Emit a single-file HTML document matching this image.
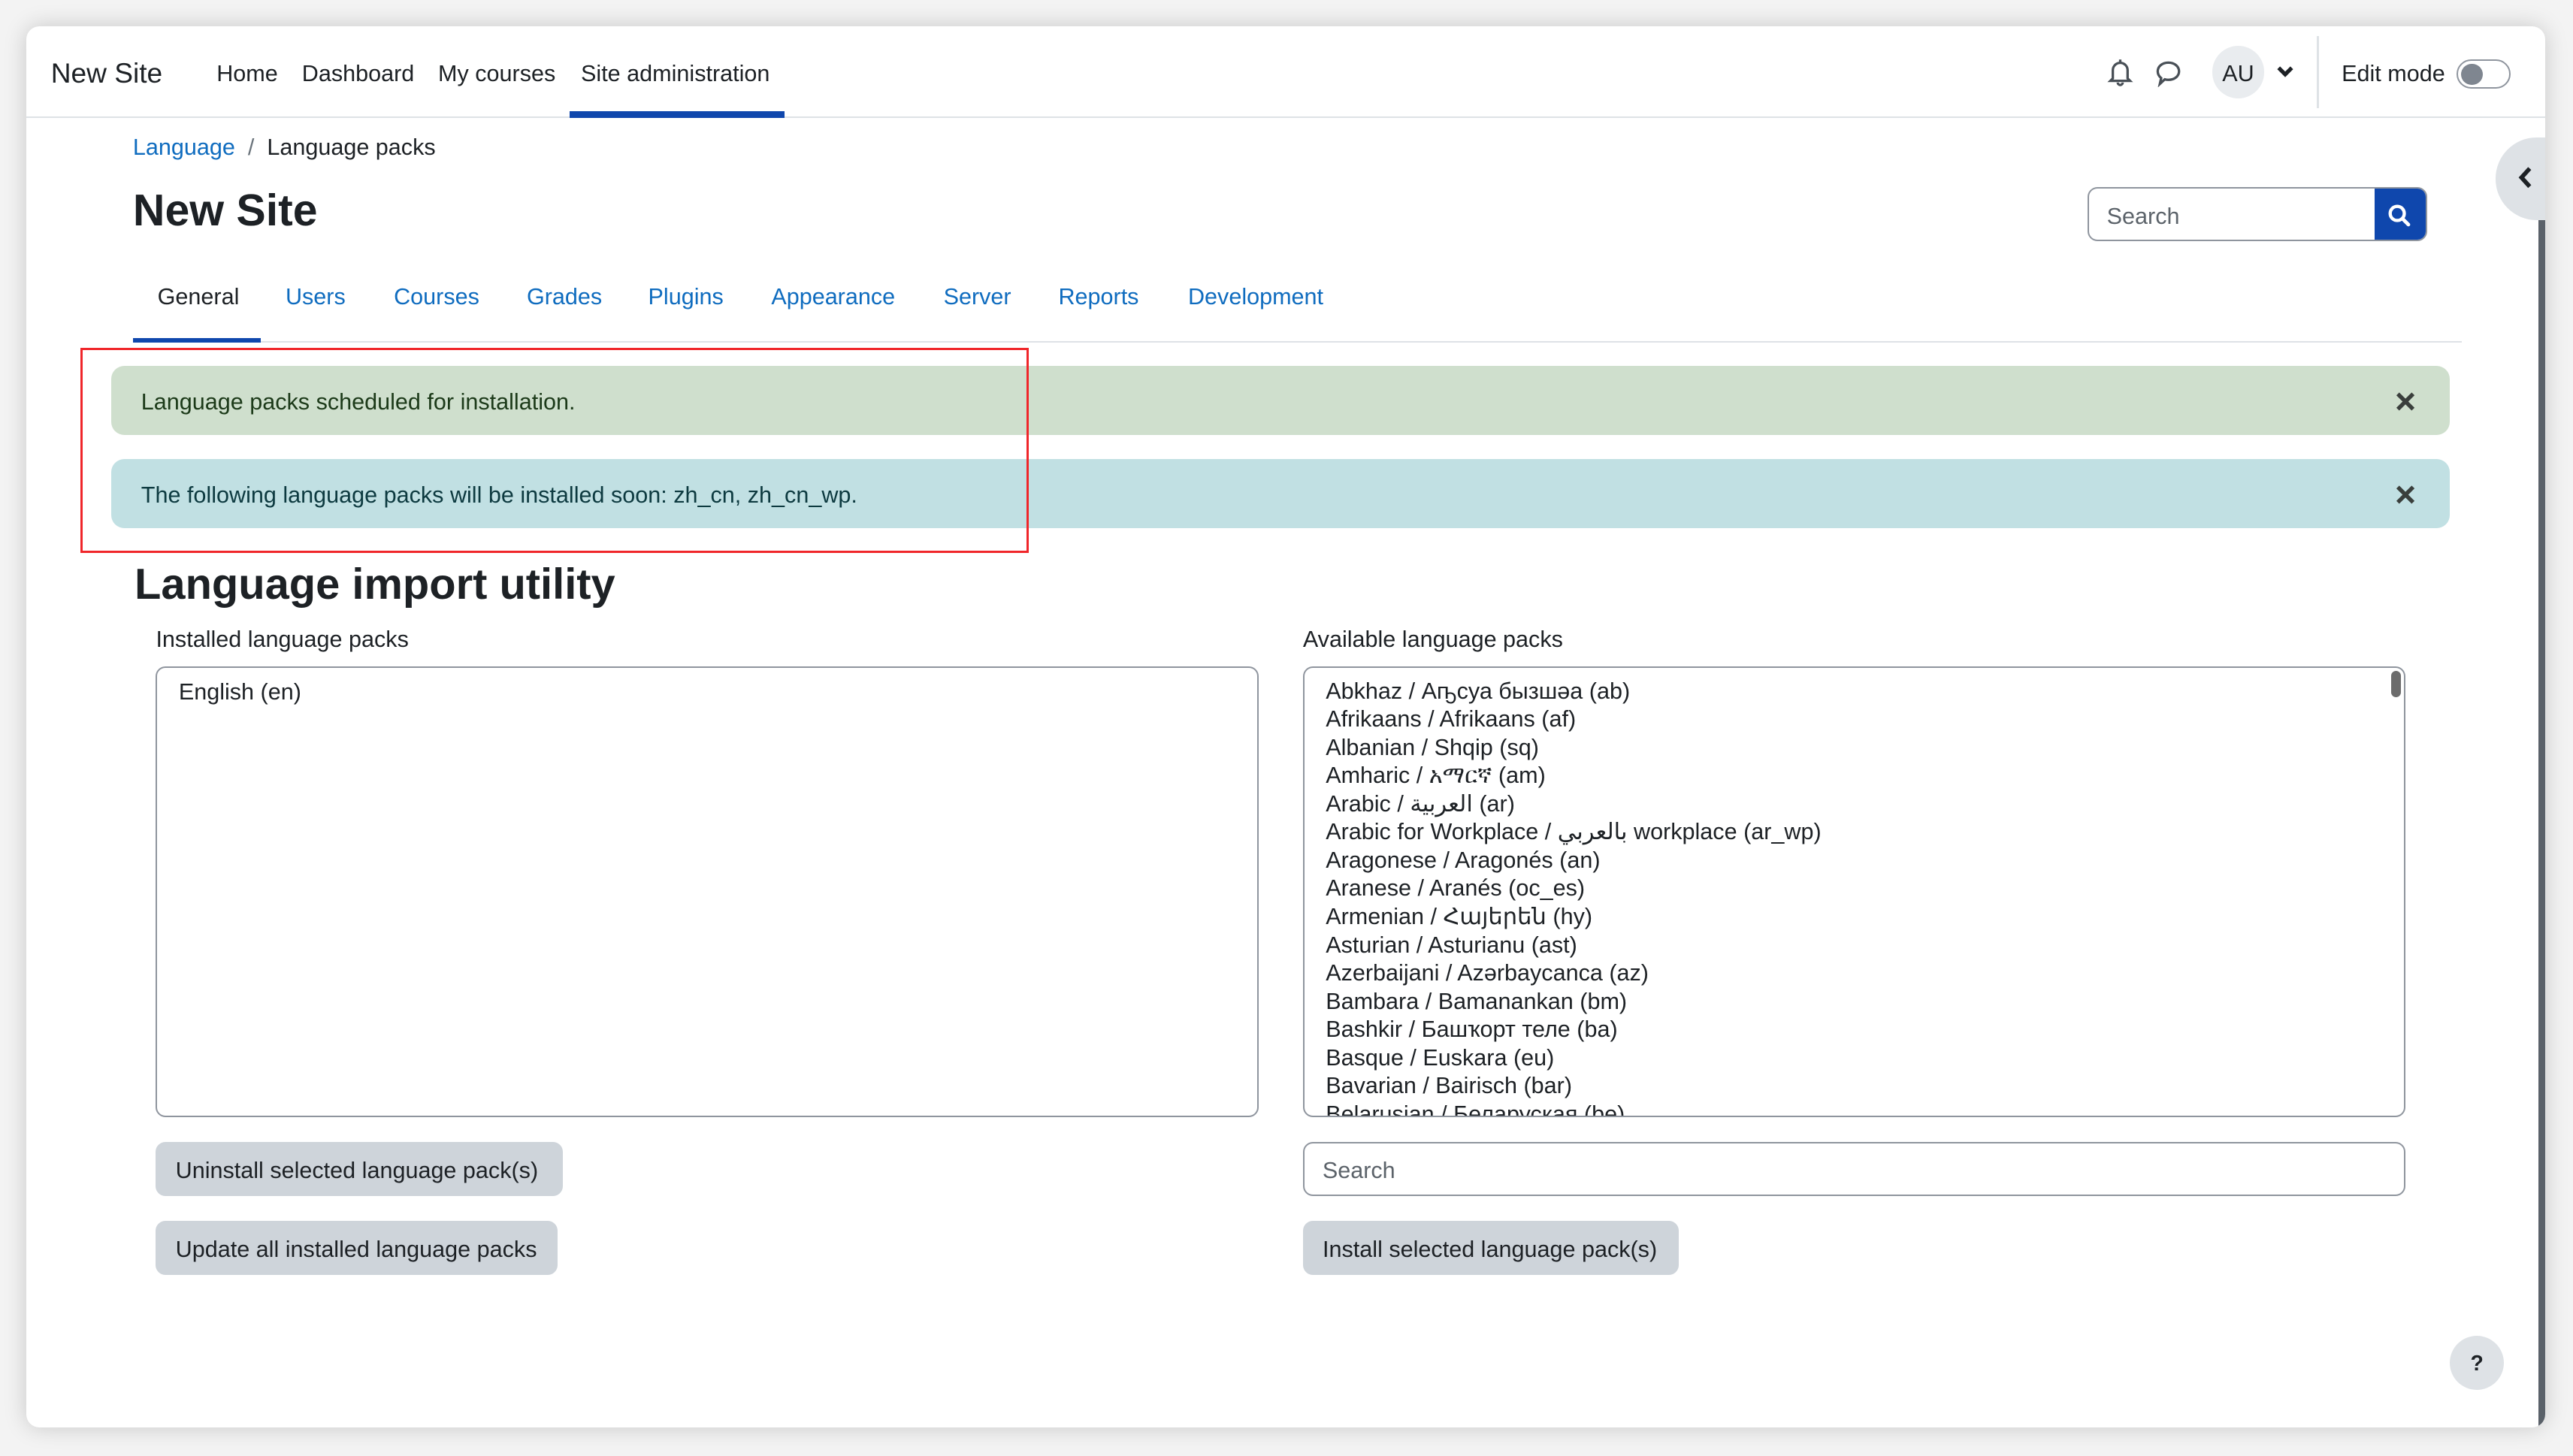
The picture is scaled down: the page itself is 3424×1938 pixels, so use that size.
<!DOCTYPE html>
<html><head><meta charset="utf-8">
<style>
*{box-sizing:border-box;margin:0;padding:0}
html,body{width:3424px;height:1938px;overflow:hidden;background:#f3f3f3}
#z{zoom:2.18367;width:1568px;height:888px;position:relative;font-family:"Liberation Sans","DejaVu Sans",sans-serif;color:#1d2125;font-size:14px}
.win{position:absolute;left:16px;top:16px;width:1535px;height:854px;background:#fff;border-radius:8px;box-shadow:0 0 14px rgba(0,0,0,.18);overflow:hidden}
.a{position:absolute;white-space:nowrap}
.nav{position:absolute;left:0;top:0;width:1535px;height:56px;border-bottom:1px solid #dee2e6}
.blue{color:#0f6cbf}
.alert{position:absolute;left:52px;width:1425px;height:42px;border-radius:8px;font-size:14px;padding-left:18px;line-height:44px}
.x{position:absolute;right:20px;top:0;font-weight:bold;font-size:17px;color:#3a3f3c;-webkit-text-stroke:0.8px #3a3f3c}
.box{position:absolute;border:1px solid #8f959e;border-radius:6px;background:#fff;overflow:hidden}
.btn{position:absolute;height:33px;background:#ced4da;border-radius:6px;line-height:35px;padding:0 12px;font-size:14px;color:#1d2125}
.list div{height:17.2px;line-height:17.2px}
</style></head><body><div id="z">
<div class="win">
 <div class="nav">
  <div class="a" style="left:15px;top:19px;font-size:17px">New Site</div>
  <div class="a" style="left:116px;top:21px">Home</div>
  <div class="a" style="left:168px;top:21px">Dashboard</div>
  <div class="a" style="left:251px;top:21px">My courses</div>
  <div class="a" style="left:338px;top:21px">Site administration</div>
  <div class="a" style="left:331px;top:52px;width:131px;height:4px;background:#0f47ad"></div>
  <svg class="a" style="left:1268px;top:19px" width="16" height="18" viewBox="0 0 16 18"><path d="M8 1.5v1.3M3.5 13V8a4.5 4.5 0 0 1 9 0v5l1.5 1.5H2L3.5 13zM6.5 15.5a1.5 1.5 0 0 0 3 0" fill="none" stroke="#495057" stroke-width="1.5"/></svg>
  <svg class="a" style="left:1297px;top:20px" width="17" height="17" viewBox="0 0 17 17"><path d="M8.5 2C12.2 2 15 4.3 15 7.3S12.2 12.5 8.5 12.5c-.8 0-1.5-.1-2.2-.3L3.3 15l.8-3.6C2.8 10.4 2 9 2 7.3 2 4.3 4.8 2 8.5 2z" fill="none" stroke="#495057" stroke-width="1.5"/></svg>
  <div class="a" style="left:1332px;top:12px;width:32px;height:32px;border-radius:50%;background:#e9ecef;text-align:center;line-height:34px;font-size:14px">AU</div>
  <svg class="a" style="left:1371px;top:24px" width="11" height="8" viewBox="0 0 11 8"><path d="M1.5 1.5l4 4 4-4" fill="none" stroke="#1d2125" stroke-width="2.4"/></svg>
  <div class="a" style="left:1396px;top:6px;width:1px;height:44px;background:#dee2e6"></div>
  <div class="a" style="left:1411px;top:21px">Edit mode</div>
  <div class="a" style="left:1481px;top:20px;width:33px;height:18px;border:1px solid #8f959e;border-radius:9px"><div style="position:absolute;left:2px;top:2px;width:13px;height:13px;border-radius:50%;background:#7f8690"></div></div>
 </div>
 <div class="a" style="left:65px;top:66px"><span class="blue">Language</span> <span style="color:#6a737b">&nbsp;/&nbsp;</span> Language packs</div>
 <div class="a" style="left:65px;top:97px;font-size:27px;font-weight:bold">New Site</div>
 <div class="a" style="left:1256px;top:98px;width:207px;height:33px;border:1px solid #8f959e;border-radius:6px;overflow:hidden"><div style="position:absolute;left:11px;top:9px;color:#5c636a">Search</div><div style="position:absolute;right:0;top:0;width:31px;height:33px;background:#0f47ad"><svg style="position:absolute;left:8px;top:9px" width="15" height="15" viewBox="0 0 15 15"><circle cx="6" cy="6" r="4.3" fill="none" stroke="#fff" stroke-width="2"/><path d="M9.2 9.2l3.6 3.6" stroke="#fff" stroke-width="2.2" stroke-linecap="round"/></svg></div></div>
 <div class="a" style="left:1505px;top:68px;width:40px;height:50px;border-radius:25px 0 0 25px;background:#dee2e6"><svg style="position:absolute;left:13px;top:17px" width="10" height="14" viewBox="0 0 10 14"><path d="M7.5 1.5L2.5 7l5 5.5" fill="none" stroke="#1d2125" stroke-width="2.6"/></svg></div>
 <div class="a" style="left:1531px;top:118px;width:4px;height:736px;background:#5a6169"></div>
 <div class="a" style="left:80px;top:157px">General</div>
 <div class="a blue" style="left:158px;top:157px">Users</div>
 <div class="a blue" style="left:224px;top:157px">Courses</div>
 <div class="a blue" style="left:305px;top:157px">Grades</div>
 <div class="a blue" style="left:379px;top:157px">Plugins</div>
 <div class="a blue" style="left:454px;top:157px">Appearance</div>
 <div class="a blue" style="left:559px;top:157px">Server</div>
 <div class="a blue" style="left:629px;top:157px">Reports</div>
 <div class="a blue" style="left:708px;top:157px">Development</div>
 <div class="a" style="left:65px;top:192px;width:1419px;height:1px;background:#dee2e6"></div>
 <div class="a" style="left:65px;top:190px;width:78px;height:3px;background:#0f47ad"></div>
 <div class="alert" style="top:207px;background:#cfdfcd;color:#1c3a19">Language packs scheduled for installation.<span class="x">✕</span></div>
 <div class="alert" style="top:264px;background:#c1e0e3;color:#0d3a40">The following language packs will be installed soon: zh_cn, zh_cn_wp.<span class="x">✕</span></div>
 <div class="a" style="left:33px;top:196px;width:578px;height:125px;border:1.5px solid #f0262a"></div>
 <div class="a" style="left:66px;top:325px;font-size:26.5px;font-weight:bold">Language import utility</div>
 <div class="a" style="left:79px;top:366px">Installed language packs</div>
 <div class="a" style="left:778px;top:366px">Available language packs</div>
 <div class="box" style="left:79px;top:390px;width:672px;height:275px"><div style="position:absolute;left:13px;top:7px">English (en)</div></div>
 <div class="box list" style="left:778px;top:390px;width:672px;height:275px;padding:6px 0 0 13px">
  <div>Abkhaz / Аҧсуа бызшәа (ab)</div><div>Afrikaans / Afrikaans (af)</div><div>Albanian / Shqip (sq)</div><div>Amharic / አማርኛ (am)</div><div>Arabic / العربية (ar)</div><div>Arabic for Workplace / بالعربي workplace (ar_wp)</div><div>Aragonese / Aragonés (an)</div><div>Aranese / Aranés (oc_es)</div><div>Armenian / Հայերեն (hy)</div><div>Asturian / Asturianu (ast)</div><div>Azerbaijani / Azərbaycanca (az)</div><div>Bambara / Bamanankan (bm)</div><div>Bashkir / Башҡорт теле (ba)</div><div>Basque / Euskara (eu)</div><div>Bavarian / Bairisch (bar)</div><div>Belarusian / Беларуская (be)</div>
  <div style="position:absolute;right:2px;top:2px;width:6px;height:16px;border-radius:3px;background:#6c6c6c"></div>
 </div>
 <div class="btn" style="left:79px;top:680px;width:248px">Uninstall selected language pack(s)</div>
 <div class="btn" style="left:79px;top:728px;width:245px">Update all installed language packs</div>
 <div class="a" style="left:778px;top:680px;width:672px;height:33px;border:1px solid #8f959e;border-radius:6px"><div style="position:absolute;left:11px;top:9px;color:#5c636a">Search</div></div>
 <div class="btn" style="left:778px;top:728px;width:229px">Install selected language pack(s)</div>
 <div class="a" style="left:1477px;top:798px;width:33px;height:33px;border-radius:50%;background:#dee2e6;text-align:center;line-height:34px;font-weight:bold;font-size:13px">?</div>
</div>
</div></body></html>
